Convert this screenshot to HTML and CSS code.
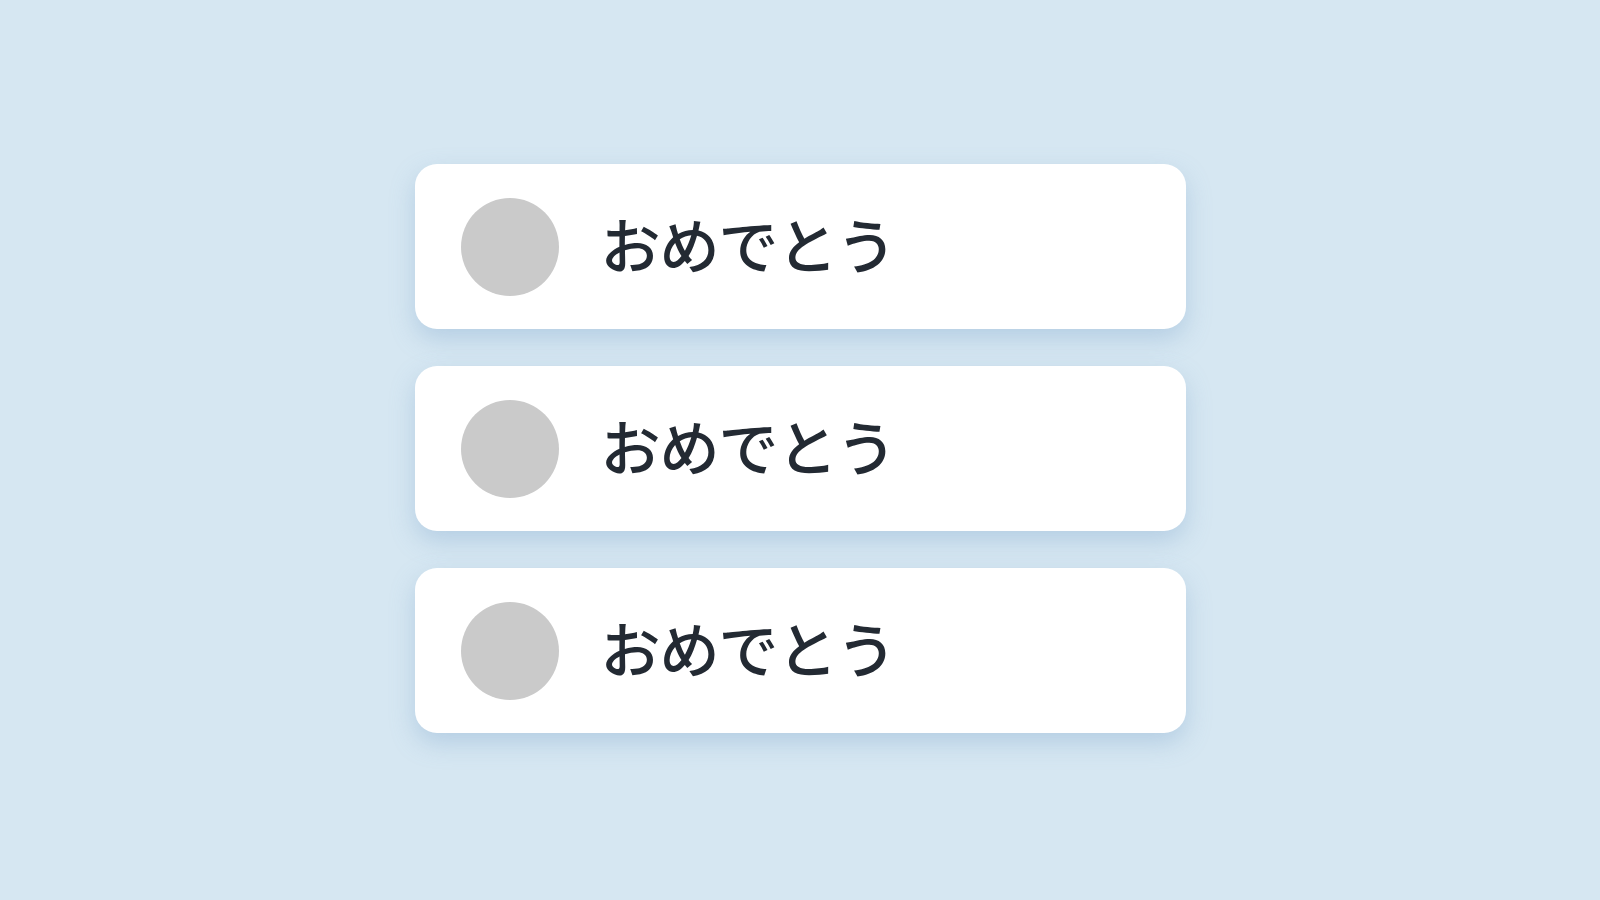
FILE: index.html
```html
<!DOCTYPE html>
<html lang="ja">
<head>
<meta charset="utf-8">
<link rel="stylesheet" href="styles.css">
</head>
<body>
<main class="stage">
  <ul class="list">
    <li class="card"><span class="avatar"></span><span class="label">おめでとう</span></li>
    <li class="card"><span class="avatar"></span><span class="label">おめでとう</span></li>
    <li class="card"><span class="avatar"></span><span class="label">おめでとう</span></li>
  </ul>
</main>
</body>
</html>
```
FILE: styles.css
```css
html, body {
  margin: 0;
  padding: 0;
  height: 100%;
}
body {
  background: #d6e7f2;
  font-family: "Noto Sans CJK JP", "Noto Sans", sans-serif;
}
.stage {
  height: 900px;
  display: flex;
  align-items: center;
  justify-content: center;
}
.list {
  list-style: none;
  margin: 0 0 3px;
  padding: 0;
  display: flex;
  flex-direction: column;
  gap: 37px;
}
.card {
  width: 771px;
  height: 165px;
  box-sizing: border-box;
  background: #ffffff;
  border-radius: 22px;
  display: flex;
  align-items: center;
  padding-left: 46px;
  box-shadow: 0 10px 24px rgba(120, 160, 200, 0.35);
}
.avatar {
  width: 98px;
  height: 98px;
  border-radius: 50%;
  background: #cacaca;
  flex: none;
}
.label {
  margin-left: 42px;
  margin-bottom: 8px;
  font-size: 60px;
  font-weight: 500;
  letter-spacing: -1px;
  color: #232a33;
  line-height: 1;
}
```
